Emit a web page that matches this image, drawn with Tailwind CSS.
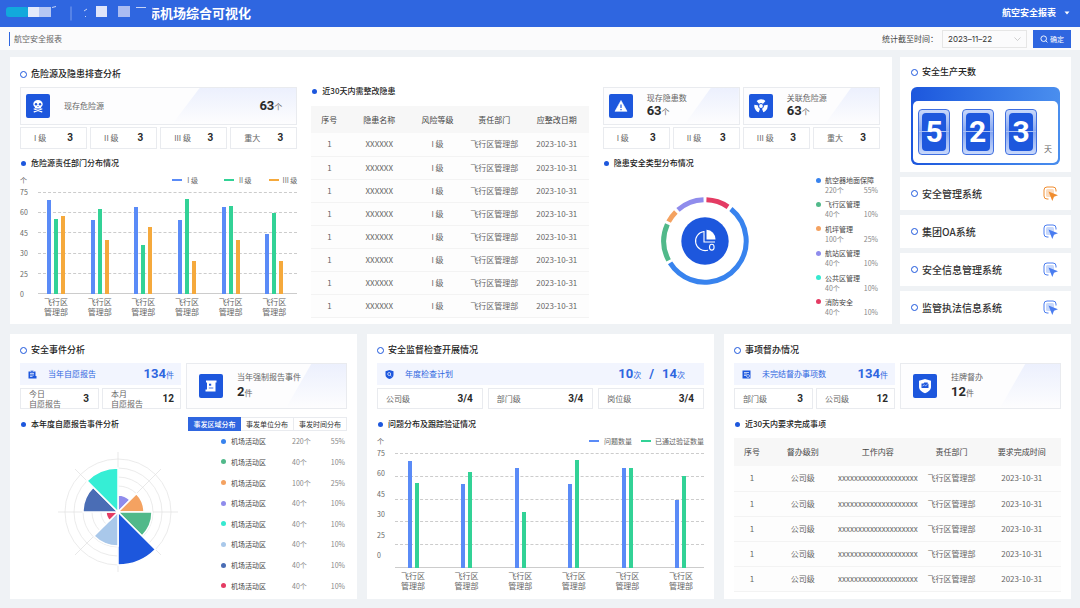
<!DOCTYPE html>
<html lang="zh-CN">
<head>
    <meta charset="UTF-8">
    <meta name="viewport" content="width=device-width, initial-scale=1.0">
    <title>航空安全报表</title>
    <script src="https://cdn.jsdelivr.net/npm/@tailwindcss/browser@4"></script>
</head>
<body class="min-h-screen bg-[#eff2f5] font-['Noto_Sans_CJK_SC',sans-serif] text-[8px] leading-[10px] text-[#666]">

    <!-- Header -->
    <header class="flex h-[27px] items-center justify-between bg-[#2f66e0] pr-2 pb-[2px] pl-[5px] text-white">
        <div class="flex items-center">
            <svg class="h-[20px] w-[142px]" viewBox="0 0 142 20" aria-hidden="true">
                <rect x="1" y="4" width="23" height="10" rx="3" fill="#12a9dc"/>
                <rect x="23" y="4" width="11" height="10" fill="#e3eafb"/>
                <rect x="34" y="4" width="12" height="10" fill="#b5c7f3"/>
                <path d="M47 4.500l4-1M79 8l3-2M80 13l1 1M131 4.500h10" stroke="#c6d3f6" fill="none"/>
                <path d="M66 3.500v14" stroke="#7f9fec"/>
                <rect x="91" y="3" width="11" height="11" fill="#dfe5fa"/>
                <rect x="113" y="3" width="12" height="11" fill="#aabcf2"/>
            </svg>
            <h1 class="relative text-[13px] leading-[20px] font-bold">际机场综合可视化
                <span class="absolute top-0 left-0 h-full w-[5px] bg-[#2f66e0]"></span>
            </h1>
        </div>
        <label class="relative flex items-center">
            <select class="w-[70px] appearance-none bg-transparent text-[9px] leading-[14px] font-bold" aria-label="报表">
                <option>航空安全报表</option>
            </select>
            <svg class="pointer-events-none absolute right-[2px] h-[4px] w-[6px]" viewBox="0 0 6 4"><path d="M.5.500h5L3 3.500z" fill="#fff"/></svg>
        </label>
    </header>

    <!-- Filter bar -->
    <div class="flex h-[23px] items-center justify-between bg-[#fbfbfc] pr-[9px] pl-[9px]">
        <h2 class="border-l border-[#2f66e0] pl-[4px] leading-[14px]">航空安全报表</h2>
        <div class="flex items-center">
            <label for="endDate" class="mr-[4px] text-[#444]">统计截至时间：</label>
            <div class="relative mr-[6px]">
                <select id="endDate" class="h-[18px] w-[85px] appearance-none border border-[#e6e6e6] bg-[#fbfbfc] pl-[5px] font-['Inter',sans-serif] text-[8px] text-[#333]">
                    <option>2023–11–22</option>
                </select>
                <svg class="pointer-events-none absolute top-[7px] right-[6px] h-[4px] w-[7px]" viewBox="0 0 7 4" fill="none" stroke="#bbb" stroke-width=".7"><path d="M.5.500l3 3 3-3"/></svg>
            </div>
            <button class="flex h-[18px] w-[38px] items-center justify-center gap-[2px] bg-[#2f66e0] text-[7px] text-white">
                <svg class="h-[8px] w-[8px]" viewBox="0 0 8 8" fill="none" stroke="#fff" stroke-width=".9"><circle cx="3.700" cy="3.700" r="2.800"/><path d="M5.700 5.700l1.700 1.700"/></svg>确定
            </button>
        </div>
    </div>

    <main class="flex flex-col gap-[10px] pt-[7px] pr-[9px] pb-[9px] pl-[10px]">
        <div class="flex gap-2">

            <!-- Hazards -->
            <section class="min-w-0 flex-1 bg-white pt-[11px] pr-[12px] pb-[6px] pl-[10px]">
                <h3 class="flex items-center gap-[4px] text-[9px] leading-[12px] font-medium text-[#222]"><i class="size-[7px] rounded-full border border-[#1d57dd]"></i>危险源及隐患排查分析</h3>
                <div class="mt-[5px] grid grid-cols-3 gap-[14px]">
                    <div class="pt-[2px]">
                        <div class="relative flex h-[38px] items-center border border-[#e9ebef] bg-[#fdfdfe] pr-[14px] pl-[5px]">
                            <div class="absolute inset-y-0 right-0 w-[124px] bg-linear-to-b from-[#ecf0fd] to-[#fdfdfe] [clip-path:polygon(22%_0,100%_0,100%_100%,0_100%)]"></div>
                            <span class="relative flex size-[24px] items-center justify-center rounded-[2px] bg-[#1d57dd]">
                                <svg class="size-[14px]" viewBox="0 0 14 14"><path d="M7 1C4.200 1 2.300 2.700 2.300 5c0 1.400.6 2.300 1.600 2.900V9.500h6.200V7.900c1-.6 1.600-1.500 1.600-2.900C11.700 2.700 9.800 1 7 1z" fill="#fff"/><circle cx="5" cy="5.300" r="1.200" fill="#1d57dd"/><circle cx="9" cy="5.300" r="1.200" fill="#1d57dd"/><path d="M7 6.700l.8 1.300H6.200z" fill="#1d57dd"/><path d="M3.200 10l7.600 2.800M10.800 10l-7.600 2.800" stroke="#fff" stroke-width="1.300" stroke-linecap="round"/></svg>
                            </span>
                            <span class="relative ml-[14px] flex-1">现存危险源</span>
                            <span class="relative"><b class="font-['Roboto',sans-serif] text-[13px] leading-[16px] text-[#2a2a2a]">63</b>个</span>
                        </div>
                        <div class="mt-[2px] grid grid-cols-4 gap-[3px]" data-levels></div>
                        <h4 class="mt-2 flex items-center gap-[5px] leading-[12px] font-medium text-[#222]"><i class="ml-px size-[5px] rounded-full bg-[#1d57dd]"></i>危险源责任部门分布情况</h4>
                        <div class="mt-[6px] flex h-[10px] items-center text-[7px]">
                            <span class="flex-1">个</span>
                            <span class="mr-[26px] flex items-center gap-[5px]"><i class="h-[2px] w-[10px] bg-[#5a8bf7]"></i>I 级</span>
                            <span class="mr-[17px] flex items-center gap-[5px]"><i class="h-[2px] w-[10px] bg-[#32d296]"></i>II 级</span>
                            <span class="flex items-center gap-[4px]"><i class="h-[2px] w-[10px] bg-[#f5a93c]"></i>III 级</span>
                        </div>
                        <div id="hazardChart" class="mt-[7px]"></div>
                    </div>

                    <div>
                        <h4 class="flex items-center gap-[5px] leading-[12px] font-medium text-[#222]"><i class="ml-px size-[5px] rounded-full bg-[#1d57dd]"></i>近30天内需整改隐患</h4>
                        <table class="mt-[9px] w-full table-fixed text-center">
                            <thead>
                                <tr class="h-[27px] bg-[#f7f7f7] text-[#444]">
                                    <th class="w-[13%] font-normal">序号</th>
                                    <th class="w-[23%] font-normal">隐患名称</th>
                                    <th class="w-[19%] font-normal">风险等级</th>
                                    <th class="w-[22%] font-normal">责任部门</th>
                                    <th class="w-[23%] font-normal">应整改日期</th>
                                </tr>
                            </thead>
                            <tbody id="hazardRows"></tbody>
                        </table>
                    </div>

                    <div class="pt-[2px]">
                        <div class="grid grid-cols-2 gap-[3px]">
                            <div class="relative flex h-[38px] items-center border border-[#e9ebef] bg-[#fdfdfe] pl-[5px]">
                                <div class="absolute inset-y-0 right-0 w-[54px] bg-linear-to-b from-[#ecf0fd] to-[#fdfdfe] [clip-path:polygon(48%_0,100%_0,100%_100%,0_100%)]"></div>
                                <span class="relative flex size-[24px] items-center justify-center rounded-[2px] bg-[#1d57dd]">
                                    <svg class="size-[14px]" viewBox="0 0 14 14"><path d="M7 1.500l6 10.800H1z" fill="#fff" stroke="#fff" stroke-linejoin="round" stroke-width=".6"/><path d="M7 5.500v3.500M7 10v1.200" stroke="#1d57dd" stroke-width="1.200"/></svg>
                                </span>
                                <div class="relative ml-[14px]">
                                    <p>现存隐患数</p>
                                    <p class="leading-[15px]"><b class="font-['Roboto',sans-serif] text-[13px] text-[#2a2a2a]">63</b>个</p>
                                </div>
                            </div>
                            <div class="relative flex h-[38px] items-center border border-[#e9ebef] bg-[#fdfdfe] pl-[5px]">
                                <div class="absolute inset-y-0 right-0 w-[54px] bg-linear-to-b from-[#ecf0fd] to-[#fdfdfe] [clip-path:polygon(48%_0,100%_0,100%_100%,0_100%)]"></div>
                                <span class="relative flex size-[24px] items-center justify-center rounded-[2px] bg-[#1d57dd]">
                                    <svg class="size-[16px]" viewBox="0 0 16 16">
                                        <circle cx="8" cy="8" r="4.700" fill="none" stroke="#fff" stroke-width="4" pathLength="360" stroke-dasharray="82 38" transform="rotate(-131 8 8)"/>
                                        <circle cx="8" cy="8" r="2.700" fill="#1d57dd"/>
                                        <circle cx="8" cy="8" r="1.900" fill="#fff"/>
                                    </svg>
                                </span>
                                <div class="relative ml-[14px]">
                                    <p>关联危险源</p>
                                    <p class="leading-[15px]"><b class="font-['Roboto',sans-serif] text-[13px] text-[#2a2a2a]">63</b>个</p>
                                </div>
                            </div>
                        </div>
                        <div class="mt-[2px] grid grid-cols-4 gap-[3px]" data-levels></div>
                        <h4 class="mt-2 flex items-center gap-[5px] leading-[12px] font-medium text-[#222]"><i class="ml-px size-[5px] rounded-full bg-[#1d57dd]"></i>隐患安全类型分布情况</h4>
                        <div class="mt-[6px] flex">
                            <div class="flex flex-1 items-start justify-center pt-[18px]">
                                <svg class="mr-[8px] size-[96px]" viewBox="-48 -48 96 96">
                                    <g id="donut" fill="none" stroke-width="5" transform="rotate(-90)"></g>
                                    <circle r="23.700" fill="#1d57dd"/>
                                    <g fill="none" stroke="#fff" stroke-width="1.100">
                                        <path d="M-1-9.500A9.600 9.600 0 1 0 3 9.200"/>
                                        <path d="M-1-9.900V1H10"/>
                                        <ellipse cx="6.800" cy="6.200" rx="2.300" ry="2.900"/>
                                    </g>
                                    <path d="M1.500-11.300A9.500 9.500 0 0 1 10.500-1.500H1.500z" fill="#fff"/>
                                </svg>
                            </div>
                            <ul id="donutLegend" class="flex h-[142px] w-[64px] flex-col justify-between pr-[2px] text-[7px]"></ul>
                        </div>
                    </div>
                </div>
            </section>

            <!-- Right column -->
            <aside class="flex w-[171px] flex-col gap-[5px]">
                <section class="h-[115px] bg-white px-[11px] pt-[9px]">
                    <h3 class="flex items-center gap-[4px] text-[9px] leading-[12px] font-medium text-[#222]"><i class="size-[7px] rounded-full border border-[#1d57dd]"></i>安全生产天数</h3>
                    <div class="mt-[9px] rounded-[6px] bg-linear-to-r from-[#1d57dd] to-[#4a8eee] px-[2px] pt-[14px] pb-[2px]">
                        <div class="flex h-[62px] items-center rounded-[5px] bg-white pr-[6px] pl-[5px]">
                            <div id="days" class="flex flex-1 justify-between"></div>
                            <span class="ml-[7px] pt-[34px]">天</span>
                        </div>
                    </div>
                </section>
                <nav id="systems" class="flex flex-col gap-[5px]"></nav>
            </aside>
        </div>

        <div class="grid grid-cols-3 gap-[10px]">

            <!-- Safety events -->
            <section class="flex flex-col bg-white px-[10px] pt-[10px] pb-[3px]">
                <h3 class="flex items-center gap-[4px] text-[9px] leading-[12px] font-medium text-[#222]"><i class="size-[7px] rounded-full border border-[#1d57dd]"></i>安全事件分析</h3>
                <div class="mt-[7px] grid grid-cols-2 gap-[5px]">
                    <div>
                        <div class="flex h-[22px] items-center bg-[#f2f5fe] pr-[7px] pl-[8px] text-[#2f66e0]">
                            <svg class="size-[9px]" viewBox="0 0 9 9"><path d="M.5 1.500h7V6H8.500v2.500H.5z" fill="#1d57dd"/><path d="M2.500.5h3v1.500h-3z" fill="#1d57dd" stroke="#f2f5fe" stroke-width=".4"/><path d="M2 3.500h4M2 5h4M2 6.500h2.500" stroke="#fff" stroke-width=".7"/></svg>
                            <span class="ml-[11px] flex-1">当年自愿报告</span>
                            <span><b class="font-['Roboto',sans-serif] text-[13px] leading-[16px]">134</b>件</span>
                        </div>
                        <div class="mt-[3px] grid grid-cols-2 gap-[3px]">
                            <div class="flex h-[21px] items-center justify-between border border-[#e9ebef] pr-[9px] pl-[8px]"><span>今日<br>自愿报告</span><b class="font-['Roboto',sans-serif] text-[10px] text-[#2a2a2a]">3</b></div>
                            <div class="flex h-[21px] items-center justify-between border border-[#e9ebef] pr-[6px] pl-[8px]"><span>本月<br>自愿报告</span><b class="font-['Roboto',sans-serif] text-[10px] text-[#2a2a2a]">12</b></div>
                        </div>
                    </div>
                    <div class="relative flex items-center border border-[#e9ebef] bg-[#fdfdfe] pl-[12px]">
                        <div class="absolute inset-y-0 right-0 w-[60px] bg-linear-to-b from-[#ecf0fd] to-[#fdfdfe] [clip-path:polygon(42%_0,100%_0,100%_100%,0_100%)]"></div>
                        <span class="relative flex size-[24px] items-center justify-center rounded-[2px] bg-[#1d57dd]">
                            <svg class="size-[14px]" viewBox="0 0 14 14"><path d="M2 1.500h10.500v2H11.500V12.500H1.500v-2H3V3.500H2z" fill="#fff"/><path d="M5 4.700h2.200v2H5z" fill="#1d57dd"/><path d="M4.800 9h4.500" stroke="#1d57dd" stroke-width=".8"/></svg>
                        </span>
                        <div class="relative ml-[14px]">
                            <p>当年强制报告事件</p>
                            <p class="mt-[2px] leading-[16px]"><b class="font-['Roboto',sans-serif] text-[13px] text-[#2a2a2a]">2</b>件</p>
                        </div>
                    </div>
                </div>
                <div class="mt-2 flex h-[14px] items-center justify-between">
                    <h4 class="flex items-center gap-[5px] leading-[12px] font-medium text-[#222]"><i class="ml-px size-[5px] rounded-full bg-[#1d57dd]"></i>本年度自愿报告事件分析</h4>
                    <div class="flex text-[7px] text-[#333]">
                        <button class="h-[14px] w-[53px] bg-[#2f66e0] font-medium text-white">事发区域分布</button>
                        <button class="h-[14px] w-[53px] border-y border-r border-[#e9ebef]">事发单位分布</button>
                        <button class="h-[14px] w-[53px] border-y border-r border-[#e9ebef]">事发时间分布</button>
                    </div>
                </div>
                <div class="flex flex-1">
                    <div class="flex flex-1 items-center justify-center">
                        <svg id="rose" class="mr-[6px] mt-[-4px] size-[122px]" viewBox="-61 -61 122 122"></svg>
                    </div>
                    <ul id="areaLegend" class="flex w-[126px] flex-col pr-[2px] text-[7px]"></ul>
                </div>
            </section>

            <!-- Inspections -->
            <section class="bg-white px-[10px] pt-[10px] pb-[8px]">
                <h3 class="flex items-center gap-[4px] text-[9px] leading-[12px] font-medium text-[#222]"><i class="size-[7px] rounded-full border border-[#1d57dd]"></i>安全监督检查开展情况</h3>
                <div class="mt-[7px] flex h-[22px] items-center bg-[#f2f5fe] pr-[19px] pl-[8px] text-[#2f66e0]">
                    <svg class="size-[9px]" viewBox="0 0 9 9"><path d="M4.500 0L8.500 1.200V5C8.500 7 6.500 8.500 4.500 9 2.500 8.500.5 7 .5 5V1.200z" fill="#1d57dd"/><circle cx="4.200" cy="4" r="1.500" fill="none" stroke="#fff" stroke-width=".7"/><path d="M5.300 5.200l1.200 1.200" stroke="#fff" stroke-width=".7"/></svg>
                    <span class="ml-[11px] flex-1">年度检查计划</span>
                    <span class="flex items-baseline"><b class="font-['Roboto',sans-serif] text-[13px] leading-[16px]">10</b>次<b class="mx-[8px] font-['Roboto',sans-serif] text-[13px] leading-[16px]">/</b><b class="font-['Roboto',sans-serif] text-[13px] leading-[16px]">14</b>次</span>
                </div>
                <div class="mt-[3px] grid grid-cols-3 gap-[5px]">
                    <div class="flex h-[21px] items-center justify-between border border-[#e9ebef] pr-[9px] pl-[8px]"><span>公司级</span><b class="font-['Roboto',sans-serif] text-[10px] text-[#2a2a2a]">3/4</b></div>
                    <div class="flex h-[21px] items-center justify-between border border-[#e9ebef] pr-[9px] pl-[8px]"><span>部门级</span><b class="font-['Roboto',sans-serif] text-[10px] text-[#2a2a2a]">3/4</b></div>
                    <div class="flex h-[21px] items-center justify-between border border-[#e9ebef] pr-[9px] pl-[8px]"><span>岗位级</span><b class="font-['Roboto',sans-serif] text-[10px] text-[#2a2a2a]">3/4</b></div>
                </div>
                <h4 class="mt-2 flex h-[14px] items-center gap-[5px] font-medium text-[#222]"><i class="ml-px size-[5px] rounded-full bg-[#1d57dd]"></i>问题分布及跟踪验证情况</h4>
                <div class="mt-[5px] flex h-[10px] items-center text-[7px]">
                    <span class="flex-1">个</span>
                    <span class="mr-[9px] flex items-center gap-[5px]"><i class="h-[2px] w-[10px] bg-[#5a8bf7]"></i>问题数量</span>
                    <span class="flex items-center gap-[4px]"><i class="h-[2px] w-[10px] bg-[#32d296]"></i>已通过验证数量</span>
                </div>
                <div id="checkChart" class="mt-[7px]"></div>
            </section>

            <!-- Supervised items -->
            <section class="bg-white px-[10px] pt-[10px] pb-[7px]">
                <h3 class="flex items-center gap-[4px] text-[9px] leading-[12px] font-medium text-[#222]"><i class="size-[7px] rounded-full border border-[#1d57dd]"></i>事项督办情况</h3>
                <div class="mt-[7px] grid grid-cols-2 gap-[5px]">
                    <div>
                        <div class="flex h-[22px] items-center bg-[#f2f5fe] pr-[7px] pl-[8px] text-[#2f66e0]">
                            <svg class="size-[9px]" viewBox="0 0 9 9"><path d="M.5.500h8v8h-8z" fill="#1d57dd"/><path d="M2 2.500h5M2 4h3M2 5.500h2" stroke="#fff" stroke-width=".7"/><circle cx="6" cy="6" r="1.500" fill="#1d57dd" stroke="#fff" stroke-width=".6"/></svg>
                            <span class="ml-[11px] flex-1">未完结督办事项数</span>
                            <span><b class="font-['Roboto',sans-serif] text-[13px] leading-[16px]">134</b>件</span>
                        </div>
                        <div class="mt-[3px] grid grid-cols-2 gap-[3px]">
                            <div class="flex h-[21px] items-center justify-between border border-[#e9ebef] pr-[9px] pl-[8px]"><span>部门级</span><b class="font-['Roboto',sans-serif] text-[10px] text-[#2a2a2a]">3</b></div>
                            <div class="flex h-[21px] items-center justify-between border border-[#e9ebef] pr-[6px] pl-[8px]"><span>公司级</span><b class="font-['Roboto',sans-serif] text-[10px] text-[#2a2a2a]">12</b></div>
                        </div>
                    </div>
                    <div class="relative flex items-center border border-[#e9ebef] bg-[#fdfdfe] pl-[12px]">
                        <div class="absolute inset-y-0 right-0 w-[60px] bg-linear-to-b from-[#ecf0fd] to-[#fdfdfe] [clip-path:polygon(42%_0,100%_0,100%_100%,0_100%)]"></div>
                        <span class="relative flex size-[24px] items-center justify-center rounded-[2px] bg-[#1d57dd]">
                            <svg class="size-[16px]" viewBox="0 0 16 16"><path d="M8 1l6 1.800v6C14 12 11 14.300 8 15.300 5 14.300 2 12 2 8.800v-6z" fill="#fff"/><path d="M4.500 5.500h2l.8-1h3.400v1.200h.8V10H4.500z" fill="#1d57dd"/><path d="M5.500 8l2-1.200 1 1 2-1.500" stroke="#fff" stroke-width=".6" fill="none"/></svg>
                        </span>
                        <div class="relative ml-[14px]">
                            <p>挂牌督办</p>
                            <p class="mt-[2px] leading-[16px]"><b class="font-['Roboto',sans-serif] text-[13px] text-[#2a2a2a]">12</b>件</p>
                        </div>
                    </div>
                </div>
                <h4 class="mt-2 flex h-[14px] items-center gap-[5px] font-medium text-[#222]"><i class="ml-px size-[5px] rounded-full bg-[#1d57dd]"></i>近30天内要求完成事项</h4>
                <table class="mt-[7px] w-full table-fixed text-center whitespace-nowrap">
                    <thead>
                        <tr class="h-[28px] bg-[#f7f7f7] text-[#444]">
                            <th class="w-[11%] font-normal">序号</th>
                            <th class="w-[20%] font-normal">督办级别</th>
                            <th class="w-[26%] font-normal">工作内容</th>
                            <th class="w-[19%] font-normal">责任部门</th>
                            <th class="w-[24%] font-normal">要求完成时间</th>
                        </tr>
                    </thead>
                    <tbody id="itemRows"></tbody>
                </table>
            </section>
        </div>
    </main>

    <script>
        const levels = ['I 级', 'II 级', 'III 级', '重大'];
        document.querySelectorAll('[data-levels]').forEach(el => {
            el.innerHTML = levels.map(name => `
                <div class="flex h-[22px] items-center justify-between border border-[#e9ebef] px-[13px]">
                    <span>${name}</span><b class="font-['Roboto',sans-serif] text-[10px] text-[#2a2a2a]">3</b>
                </div>`).join('');
        });

        // Bar heights are pixels inside the plot
        function barChart(id, plotClass, groups) {
            const colors = ['bg-[#5a8bf7]', 'bg-[#32d296]', 'bg-[#f5a93c]'];
            document.getElementById(id).innerHTML = `
                <div class="relative ${plotClass}">
                    <div class="absolute inset-y-0 right-0 left-[18px] flex flex-col border-b border-[#ccc]">
                        ${'<div class="flex-1 border-t border-dashed border-[#ccc]"></div>'.repeat(5)}
                    </div>
                    <div class="absolute top-[-5px] left-0 flex h-[112px] flex-col justify-between text-[7px]">
                        ${[75, 60, 45, 30, 25, 0].map(n => `<span>${n}</span>`).join('')}
                    </div>
                    <div class="relative flex h-full justify-between pr-[11px] pl-[24px]">
                        ${groups.map(g => `<div class="flex w-[24px] items-end justify-center gap-[3px]">
                            ${g.map((h, i) => `<i class="w-[4px] shrink-0 ${colors[i]}" style="height:${h}px"></i>`).join('')}
                        </div>`).join('')}
                    </div>
                </div>
                <div class="mt-[3px] flex justify-between pr-[11px] pl-[24px]">
                    ${groups.map(() => '<span class="w-[24px]">飞行区<br>管理部</span>').join('')}
                </div>`;
        }
        barChart('hazardChart', 'h-[102px]', [[94, 75, 78], [74, 85, 54], [87, 49, 67], [74, 95, 33], [87, 88, 54], [60, 81, 33]]);
        barChart('checkChart', 'h-[115px]', [[107, 85], [84, 96], [100, 56], [84, 108], [100, 100], [68, 92]]);

        document.getElementById('hazardRows').innerHTML = Array(8).fill(`
            <tr class="h-[23px] border-b border-[#f3f3f3] bg-[#fdfdfd]">
                <td>1</td><td>XXXXXX</td><td>I 级</td><td>飞行区管理部</td><td>2023-10-31</td>
            </tr>`).join('');
        document.getElementById('itemRows').innerHTML = Array(5).fill(`
            <tr class="h-[25px] border-b border-[#f3f3f3] bg-[#fdfdfd]">
                <td>1</td><td>公司级</td><td>xxxxxxxxxxxxxxxxxxxx</td><td>飞行区管理部</td><td>2023-10-31</td>
            </tr>`).join('');

        // Donut: colour, start angle, end angle
        const arcs = [['#e43b63', 2, 34], ['#3883ee', 39, 238], ['#51b98a', 242, 294], ['#f4a261', 298, 315], ['#8f8cec', 319, 358]];
        document.getElementById('donut').innerHTML = arcs.map(([c, a, b]) =>
            `<circle r="41.200" stroke="${c}" pathLength="360" stroke-dasharray="${b - a} 360" transform="rotate(${a})"/>`).join('');

        const types = [
            ['航空器地面保障', '220个', '55%', 'bg-[#3883ee]'],
            ['飞行区管理', '40个', '10%', 'bg-[#51b98a]'],
            ['机坪管理', '100个', '25%', 'bg-[#f4a261]'],
            ['航站区管理', '40个', '10%', 'bg-[#8f8cec]'],
            ['公共区管理', '40个', '10%', 'bg-[#36e9d0]'],
            ['消防安全', '40个', '10%', 'bg-[#e43b63]']
        ];
        document.getElementById('donutLegend').innerHTML = types.map(([name, count, pct, dot]) => `
            <li>
                <p class="flex items-center gap-[4px] text-[#444]"><i class="size-[5px] rounded-full ${dot}"></i>${name}</p>
                <p class="flex justify-between pl-[9px] text-[#888]"><span>${count}</span><span>${pct}</span></p>
            </li>`).join('');

        document.getElementById('days').innerHTML = ['5', '2', '3'].map(n => `
            <span class="flex h-[46px] w-[32px] items-center justify-center rounded-[4px] border border-[#3f6fe0] bg-linear-to-b from-[#c9d8fa] via-[#86a6f0] to-[#c9d8fa]">
                <b class="relative flex h-[38px] w-[24px] items-center justify-center rounded-[4px] bg-[#1d57dd] font-['Roboto',sans-serif] text-[30px] leading-[38px] text-white">
                    <i class="absolute inset-x-[-3px] top-[18px] h-px bg-[#a9c0f5]"></i>
                    <span class="relative">${n}</span>
                </b>
            </span>`).join('');

        const systems = [['安全管理系统', '#f08c2e'], ['集团OA系统', '#4a7df0'], ['安全信息管理系统', '#4a7df0'], ['监管执法信息系统', '#4a7df0']];
        document.getElementById('systems').innerHTML = systems.map(([name, c]) => `
            <a href="#" class="flex h-[33px] items-center gap-[4px] bg-white pr-[13px] pl-[11px] text-[10px] font-medium text-[#333]">
                <i class="size-[7px] rounded-full border border-[#1d57dd]"></i>
                <span class="flex-1">${name}</span>
                <svg class="size-[15px]" viewBox="0 0 15 15">
                    <path d="M5.500 13H4a3 3 0 0 1-3-3V4a3 3 0 0 1 3-3h6a3 3 0 0 1 3 3v1.500" fill="none" stroke="${c}" stroke-width="1"/>
                    <rect x="3" y="3" width="8" height="8" rx="1.500" fill="${c}" fill-opacity=".3"/>
                    <path d="M5.500 5.500l9.500 3.700-4 1.500L9.300 15z" fill="${c}"/>
                </svg>
            </a>`).join('');

        // Rose chart: eight 45 degree wedges, clockwise from north
        const wedges = [['#8f8cec', 17], ['#f4a261', 26], ['#51b98a', 34], ['#1d57dd', 53], ['#a9c8ea', 34], ['#e43b63', 12], ['#4a6db5', 35], ['#36eed5', 44]];
        let rose = [53, 44, 35, 26, 17, 9].map(r => `<circle r="${r}" fill="none" stroke="#e3e3e3" stroke-width=".7"/>`).join('');
        rose += '<path d="M0-60V60M-60 0H60M-43-43L43 43M43-43L-43 43" stroke="#e0e0e0" stroke-width=".7"/>';
        const at = (r, deg) => `${r * Math.sin(deg * Math.PI / 180)} ${-r * Math.cos(deg * Math.PI / 180)}`;
        wedges.forEach(([c, r], i) => {
            rose += `<path d="M0 0L${at(r, i * 45)}A${r} ${r} 0 0 1 ${at(r, i * 45 + 45)}Z" fill="${c}" stroke="#fff" stroke-width="1.500"/>`;
        });
        document.getElementById('rose').innerHTML = rose;

        const areas = [
            ['220个', '55%', 'bg-[#3883ee]'], ['40个', '10%', 'bg-[#51b98a]'], ['100个', '25%', 'bg-[#f4a261]'], ['40个', '10%', 'bg-[#8f8cec]'],
            ['40个', '10%', 'bg-[#36e9d0]'], ['40个', '10%', 'bg-[#a9c8ea]'], ['40个', '10%', 'bg-[#4a6db5]'], ['40个', '10%', 'bg-[#e43b63]']
        ];
        document.getElementById('areaLegend').innerHTML = areas.map(([count, pct, dot]) => `
            <li class="flex flex-1 items-center text-[#888]">
                <i class="mr-[5px] size-[5px] rounded-full ${dot}"></i>
                <span class="w-[61px] text-[#444]">机场活动区</span>
                <span class="flex-1">${count}</span>
                <span>${pct}</span>
            </li>`).join('');
    </script>
</body>
</html>
